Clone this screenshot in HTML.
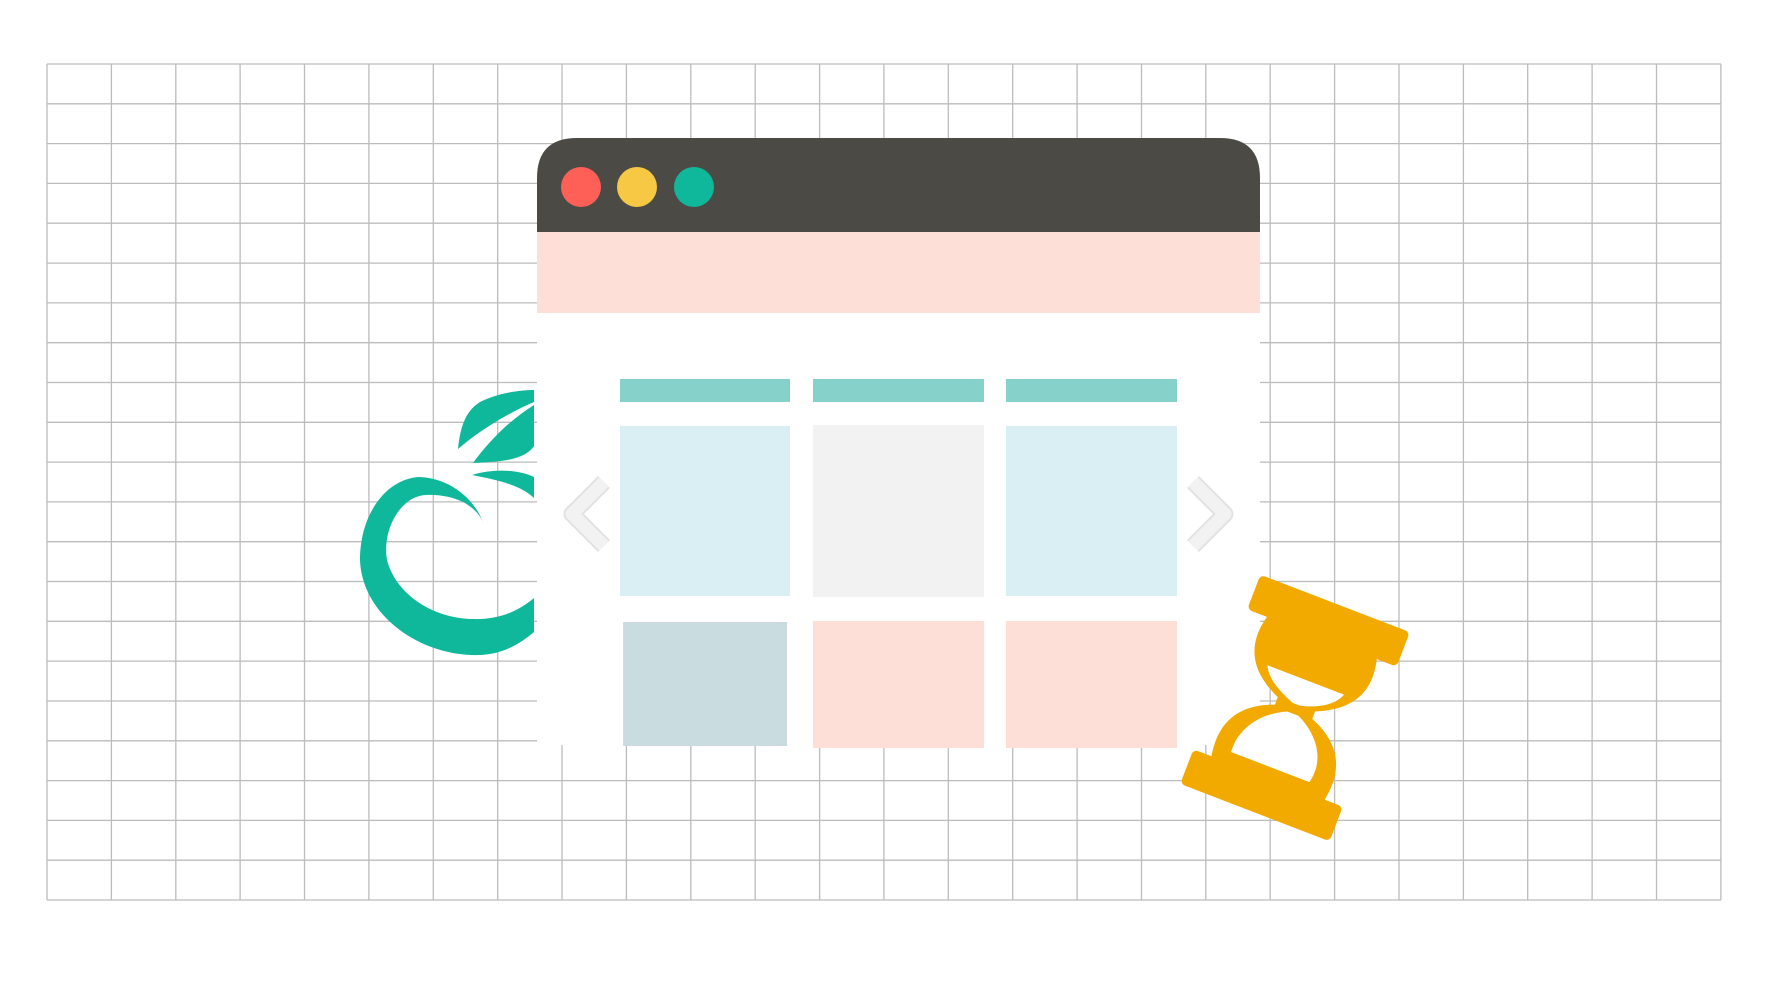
<!DOCTYPE html>
<html><head><meta charset="utf-8"><style>
html,body{margin:0;padding:0;background:#fff;width:1768px;height:1000px;overflow:hidden}
svg{display:block}
</style></head><body>
<svg width="1768" height="1000" viewBox="0 0 1768 1000" xmlns="http://www.w3.org/2000/svg">
<g stroke="#bcbcbc" stroke-width="1.3">
<line x1="47" y1="64" x2="47" y2="900"/><line x1="111.4" y1="64" x2="111.4" y2="900"/><line x1="175.8" y1="64" x2="175.8" y2="900"/><line x1="240.1" y1="64" x2="240.1" y2="900"/><line x1="304.5" y1="64" x2="304.5" y2="900"/><line x1="368.9" y1="64" x2="368.9" y2="900"/><line x1="433.3" y1="64" x2="433.3" y2="900"/><line x1="497.7" y1="64" x2="497.7" y2="900"/><line x1="562" y1="64" x2="562" y2="900"/><line x1="626.4" y1="64" x2="626.4" y2="900"/><line x1="690.8" y1="64" x2="690.8" y2="900"/><line x1="755.2" y1="64" x2="755.2" y2="900"/><line x1="819.6" y1="64" x2="819.6" y2="900"/><line x1="883.9" y1="64" x2="883.9" y2="900"/><line x1="948.3" y1="64" x2="948.3" y2="900"/><line x1="1012.7" y1="64" x2="1012.7" y2="900"/><line x1="1077.1" y1="64" x2="1077.1" y2="900"/><line x1="1141.5" y1="64" x2="1141.5" y2="900"/><line x1="1205.8" y1="64" x2="1205.8" y2="900"/><line x1="1270.2" y1="64" x2="1270.2" y2="900"/><line x1="1334.6" y1="64" x2="1334.6" y2="900"/><line x1="1399" y1="64" x2="1399" y2="900"/><line x1="1463.4" y1="64" x2="1463.4" y2="900"/><line x1="1527.7" y1="64" x2="1527.7" y2="900"/><line x1="1592.1" y1="64" x2="1592.1" y2="900"/><line x1="1656.5" y1="64" x2="1656.5" y2="900"/><line x1="1720.9" y1="64" x2="1720.9" y2="900"/>
<line x1="47" y1="64" x2="1721" y2="64"/><line x1="47" y1="103.8" x2="1721" y2="103.8"/><line x1="47" y1="143.6" x2="1721" y2="143.6"/><line x1="47" y1="183.4" x2="1721" y2="183.4"/><line x1="47" y1="223.2" x2="1721" y2="223.2"/><line x1="47" y1="263.1" x2="1721" y2="263.1"/><line x1="47" y1="302.9" x2="1721" y2="302.9"/><line x1="47" y1="342.7" x2="1721" y2="342.7"/><line x1="47" y1="382.5" x2="1721" y2="382.5"/><line x1="47" y1="422.3" x2="1721" y2="422.3"/><line x1="47" y1="462.1" x2="1721" y2="462.1"/><line x1="47" y1="501.9" x2="1721" y2="501.9"/><line x1="47" y1="541.7" x2="1721" y2="541.7"/><line x1="47" y1="581.5" x2="1721" y2="581.5"/><line x1="47" y1="621.3" x2="1721" y2="621.3"/><line x1="47" y1="661.1" x2="1721" y2="661.1"/><line x1="47" y1="701" x2="1721" y2="701"/><line x1="47" y1="740.8" x2="1721" y2="740.8"/><line x1="47" y1="780.6" x2="1721" y2="780.6"/><line x1="47" y1="820.4" x2="1721" y2="820.4"/><line x1="47" y1="860.2" x2="1721" y2="860.2"/><line x1="47" y1="900" x2="1721" y2="900"/>
</g>
<g fill="#0fb89a">
<path d="M483,522 C470,490 440,477 418,477 C385,480 360,515 360,560 C362,615 420,657 480,655 C505,654 522,642 534,632 L534,598 C520,610 500,620 472,619 C430,618 395,592 387,560 C382,530 400,497 425,495 C455,494 475,505 483,522 Z"/>
<path d="M458,449 C460,430 464,412 480,402 C498,393 520,390 534,390 L534,402 C510,412 480,430 458,449 Z"/>
<path d="M473,463 C490,440 510,420 534,405 L534,446 C525,460 500,462 473,463 Z"/>
<path d="M472,475 C495,468 520,470 534,477 L534,498 C520,485 498,480 472,475 Z"/>
</g>
<path d="M537,178 Q537,138 577,138 L1220,138 Q1260,138 1260,178 L1260,232 L537,232 Z" fill="#4b4a45"/>
<rect x="537" y="232" width="723" height="81" fill="#fddfd7"/>
<rect x="537" y="313" width="723" height="432" fill="#fff"/>
<circle cx="581" cy="187" r="20" fill="#fe5f57"/>
<circle cx="637" cy="187" r="20" fill="#f6c844"/>
<circle cx="694" cy="187" r="20" fill="#0fb89a"/>
<rect x="620" y="379" width="170" height="23" fill="#86d2cb"/>
<rect x="813" y="379" width="171" height="23" fill="#86d2cb"/>
<rect x="1006" y="379" width="171" height="23" fill="#86d2cb"/>
<rect x="620" y="426" width="170" height="170" fill="#daeff3"/>
<rect x="813" y="425" width="171" height="172" fill="#f2f2f2"/>
<rect x="1006" y="426" width="171" height="170" fill="#daeff3"/>
<rect x="623" y="622" width="164" height="124" fill="#c9dde0"/>
<rect x="813" y="621" width="171" height="127" fill="#fddfd7"/>
<rect x="1006" y="621" width="171" height="127" fill="#fddfd7"/>
<g fill="none" stroke-linejoin="round">
<polyline points="604,482 572,514 604,546" stroke="#e2e2e2" stroke-width="17"/>
<polyline points="604,482 572,514 604,546" stroke="#f2f2f2" stroke-width="13"/>
<polyline points="1193,482 1225,514 1193,546" stroke="#e2e2e2" stroke-width="17"/>
<polyline points="1193,482 1225,514 1193,546" stroke="#f2f2f2" stroke-width="13"/>
</g>
<g transform="translate(1295,708) rotate(21)">
<rect x="-80" y="-112" width="160" height="37" rx="5" fill="#f2a900"/>
<rect x="-80" y="75" width="160" height="37" rx="5" fill="#f2a900"/>
<path d="M-58,-78 C-66,-50 -62,-22 -20,-4 L-20,4 C-62,20 -66,50 -60,78 L60,78 C66,50 62,20 20,4 L20,-4 C62,-22 66,-50 58,-78 Z" fill="#f2a900"/>
<path d="M-41,-30 L41,-30 C36,-16 20,-8 4,-4 L-4,-4 C-20,-10 -36,-18 -41,-30 Z" fill="#fff"/>
<path d="M-44,64 C-46,40 -32,18 -6,6 L6,6 C32,18 46,40 40,64 Z" fill="#fff"/>
</g>
</svg>
</body></html>
